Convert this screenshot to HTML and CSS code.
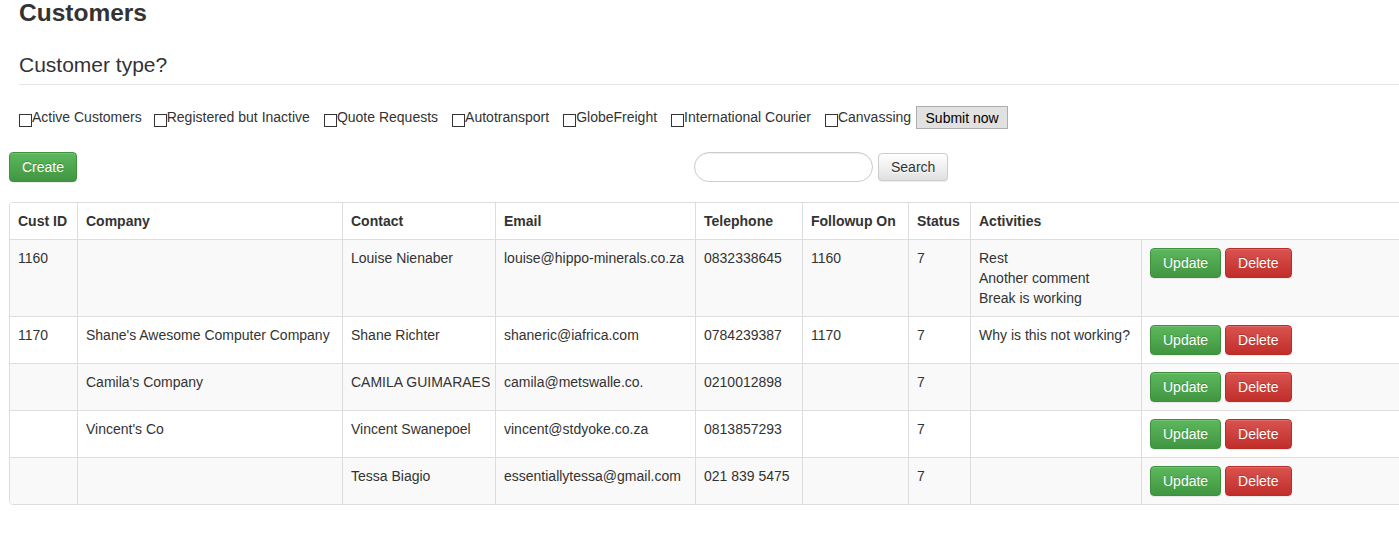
FILE: index.html
```html
<!DOCTYPE html>
<html lang="en">
<head>
<meta charset="utf-8">
<title>Customers</title>
<link rel="stylesheet" href="styles.css">
</head>
<body>
<div class="page">
  <div class="head">
    <h2 class="title">Customers</h2>
    <form class="filter">
      <div class="legend">Customer type?</div>
      <div class="checks">
        <label class="check"><input type="checkbox">Active Customers</label>
        <label class="check"><input type="checkbox">Registered but Inactive</label>
        <label class="check"><input type="checkbox">Quote Requests</label>
        <label class="check"><input type="checkbox">Autotransport</label>
        <label class="check"><input type="checkbox">GlobeFreight</label>
        <label class="check"><input type="checkbox">International Courier</label>
        <label class="check"><input type="checkbox">Canvassing</label>
        <button type="button" class="submit">Submit now</button>
      </div>
    </form>
  </div>

  <div class="toolbar">
    <div><button type="button" class="btn btn-success">Create</button></div>
    <div class="search">
      <input type="text" class="search-input">
      <button type="button" class="btn btn-default btn-search">Search</button>
    </div>
  </div>

  <div class="panel">
    <table class="grid">
      <colgroup>
        <col class="c1"><col class="c2"><col class="c3"><col class="c4"><col class="c5"><col class="c6"><col class="c7"><col class="c8"><col class="c9">
      </colgroup>
      <thead>
        <tr>
          <th>Cust ID</th><th>Company</th><th>Contact</th><th>Email</th><th>Telephone</th><th>Followup On</th><th>Status</th><th colspan="2">Activities</th>
        </tr>
      </thead>
      <tbody>
        <tr class="odd">
          <td>1160</td><td></td><td>Louise Nienaber</td><td>louise@hippo-minerals.co.za</td><td>0832338645</td><td>1160</td><td>7</td>
          <td>Rest<br>Another comment<br>Break is working</td>
          <td><button type="button" class="btn btn-success">Update</button> <button type="button" class="btn btn-danger">Delete</button></td>
        </tr>
        <tr>
          <td>1170</td><td>Shane's Awesome Computer Company</td><td>Shane Richter</td><td>shaneric@iafrica.com</td><td>0784239387</td><td>1170</td><td>7</td>
          <td>Why is this not working?</td>
          <td><button type="button" class="btn btn-success">Update</button> <button type="button" class="btn btn-danger">Delete</button></td>
        </tr>
        <tr class="odd">
          <td></td><td>Camila's Company</td><td>CAMILA GUIMARAES</td><td>camila@metswalle.co.</td><td>0210012898</td><td></td><td>7</td>
          <td></td>
          <td><button type="button" class="btn btn-success">Update</button> <button type="button" class="btn btn-danger">Delete</button></td>
        </tr>
        <tr>
          <td></td><td>Vincent's Co</td><td>Vincent Swanepoel</td><td>vincent@stdyoke.co.za</td><td>0813857293</td><td></td><td>7</td>
          <td></td>
          <td><button type="button" class="btn btn-success">Update</button> <button type="button" class="btn btn-danger">Delete</button></td>
        </tr>
        <tr class="odd last">
          <td></td><td></td><td>Tessa Biagio</td><td>essentiallytessa@gmail.com</td><td>021 839 5475</td><td></td><td>7</td>
          <td></td>
          <td><button type="button" class="btn btn-success">Update</button> <button type="button" class="btn btn-danger">Delete</button></td>
        </tr>
      </tbody>
    </table>
  </div>
</div>
</body>
</html>
```

FILE: styles.css
```css
* { box-sizing: border-box; }

html, body {
  margin: 0;
  padding: 0;
  background: #fff;
}

body {
  font-family: "Liberation Sans", Arial, Helvetica, sans-serif;
  font-size: 14px;
  line-height: 20px;
  color: #333;
}

.page {
  padding-left: 9px;
  overflow: hidden;
  width: 1399px;
  min-height: 553px;
}

.head {
  padding-left: 10px;
}

.title {
  margin: 0;
  font-size: 24.5px;
  line-height: 26px;
  font-weight: bold;
}

.filter {
  margin: 0;
}

.legend {
  margin-top: 24px;
  font-size: 21px;
  line-height: 30px;
  padding-bottom: 4px;
  border-bottom: 1px solid #e5e5e5;
}

.checks {
  margin-top: 21px;
  height: 23px;
  display: flex;
  align-items: center;
}

.check {
  display: inline-flex;
  align-items: center;
  margin-right: 14px;
  white-space: nowrap;
  position: relative;
  top: -1px;
}

.check:first-child {
  margin-right: 12px;
}

.check input {
  -webkit-appearance: none;
  appearance: none;
  width: 13px;
  height: 13px;
  margin: 8px 0 0 0;
  border: 1px solid #333;
  background: #fff;
  border-radius: 0;
}

.check:last-of-type {
  margin-right: 5px;
}

.submit {
  width: 92px;
  height: 23px;
  padding: 0;
  font-family: "Liberation Sans", Arial, sans-serif;
  font-size: 14px;
  color: #000;
  background: #e1e1e1;
  border: 1px solid #adadad;
  border-radius: 0;
}

.toolbar {
  margin-top: 23px;
  display: grid;
  grid-template-columns: 685px 1fr;
  align-items: center;
  height: 30px;
}

.search {
  display: flex;
  align-items: center;
  gap: 5px;
}

.search-input {
  width: 179px;
  height: 30px;
  border: 1px solid #ccc;
  border-radius: 15px;
  box-shadow: inset 0 1px 1px rgba(0,0,0,.075);
  padding: 4px 12px;
  font-family: inherit;
  font-size: 14px;
}

.btn {
  display: inline-block;
  font-family: "Liberation Sans", Arial, sans-serif;
  font-size: 14px;
  line-height: 18px;
  padding: 5px 12px;
  border: 1px solid transparent;
  border-radius: 4px;
  vertical-align: middle;
  cursor: pointer;
  box-shadow: inset 0 1px 0 rgba(255,255,255,.15), 0 1px 1px rgba(0,0,0,.075);
}

.btn-success {
  color: #fff;
  text-shadow: 0 -1px 0 rgba(0,0,0,.2);
  background-image: linear-gradient(to bottom, #5cb85c 0, #419641 100%);
  border-color: #3e8f3e;
}

.btn-danger {
  color: #fff;
  text-shadow: 0 -1px 0 rgba(0,0,0,.2);
  background-image: linear-gradient(to bottom, #d9534f 0, #c12e2a 100%);
  border-color: #b92c28;
}

.btn-default {
  color: #333;
  text-shadow: 0 1px 0 #fff;
  background-image: linear-gradient(to bottom, #fff 0, #e0e0e0 100%);
  border-color: #ccc;
}

.btn-search {
  padding: 4px 12px;
}

.panel {
  margin-top: 20px;
  width: 1412px;
  border: 1px solid #ddd;
  border-radius: 4px;
  overflow: hidden;
}

.grid {
  border-collapse: separate;
  border-spacing: 0;
  table-layout: fixed;
  width: 1410px;
}

.c1 { width: 67px; }
.c2 { width: 265px; }
.c3 { width: 153px; }
.c4 { width: 200px; }
.c5 { width: 107px; }
.c6 { width: 106px; }
.c7 { width: 62px; }
.c8 { width: 171px; }
.c9 { width: 279px; }

.grid th,
.grid td {
  padding: 8px;
  text-align: left;
  border-left: 1px solid #ddd;
  border-bottom: 1px solid #ddd;
  white-space: nowrap;
}

.grid th:first-child,
.grid td:first-child {
  border-left: 0;
}

.grid th {
  font-weight: bold;
  vertical-align: bottom;
  background: #fff;
}

.grid td {
  vertical-align: top;
}

.grid tr.odd td {
  background: #f9f9f9;
}

.grid tr.last td {
  border-bottom: 0;
}
```
